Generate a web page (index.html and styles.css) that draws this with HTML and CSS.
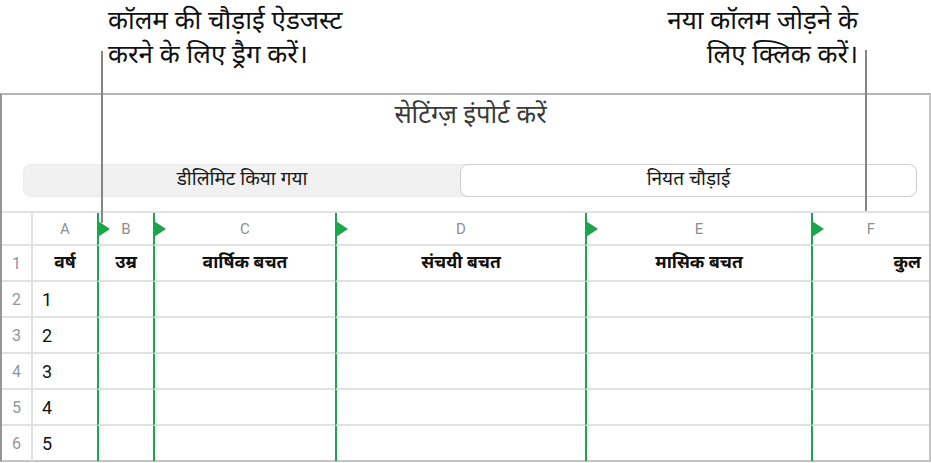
FILE: index.html
```html
<!DOCTYPE html>
<html lang="hi">
<head>
<meta charset="utf-8">
<title>सेटिंग्ज़ इंपोर्ट करें</title>
<link rel="stylesheet" href="styles.css">
</head>
<body>
<div class="page">
  <div class="callouts">
    <div class="callout callout-left">कॉलम की चौड़ाई ऐडजस्ट<br>करने के लिए ड्रैग करें।</div>
    <div class="callout callout-right">नया कॉलम जोड़ने के<br>लिए क्लिक करें।</div>
  </div>
  <div class="dialog">
    <div class="title">सेटिंग्ज़ इंपोर्ट करें</div>
    <div class="segmented">
      <div class="seg seg-left">डीलिमिट किया गया</div>
      <div class="seg seg-right">नियत चौड़ाई</div>
    </div>
    <div class="sheet">
      <div class="cell hdr num"></div>
      <div class="cell hdr">A</div>
      <div class="cell hdr g mark">B</div>
      <div class="cell hdr g mark">C</div>
      <div class="cell hdr g mark">D</div>
      <div class="cell hdr g mark">E</div>
      <div class="cell hdr g mark">F</div>

      <div class="cell rn num">1</div>
      <div class="cell lbl">वर्ष</div>
      <div class="cell lbl g">उम्र</div>
      <div class="cell lbl g">वार्षिक बचत</div>
      <div class="cell lbl g">संचयी बचत</div>
      <div class="cell lbl g">मासिक बचत</div>
      <div class="cell lbl g right">कुल</div>

      <div class="cell rn num">2</div>
      <div class="cell val">1</div>
      <div class="cell g"></div><div class="cell g"></div><div class="cell g"></div><div class="cell g"></div><div class="cell g"></div>

      <div class="cell rn num">3</div>
      <div class="cell val">2</div>
      <div class="cell g"></div><div class="cell g"></div><div class="cell g"></div><div class="cell g"></div><div class="cell g"></div>

      <div class="cell rn num">4</div>
      <div class="cell val">3</div>
      <div class="cell g"></div><div class="cell g"></div><div class="cell g"></div><div class="cell g"></div><div class="cell g"></div>

      <div class="cell rn num">5</div>
      <div class="cell val">4</div>
      <div class="cell g"></div><div class="cell g"></div><div class="cell g"></div><div class="cell g"></div><div class="cell g"></div>

      <div class="cell rn num last">6</div>
      <div class="cell val last">5</div>
      <div class="cell g last"></div><div class="cell g last"></div><div class="cell g last"></div><div class="cell g last"></div><div class="cell g last"></div>
    </div>
  </div>
  <div class="leader leader-left"></div>
  <div class="leader leader-right"></div>
</div>
</body>
</html>
```
FILE: styles.css
```css
html, body {
  margin: 0;
  padding: 0;
  background: #ffffff;
}
body {
  width: 931px;
  height: 463px;
  overflow: hidden;
  font-family: "Noto Sans Devanagari", "Noto Sans", "Roboto", sans-serif;
  color: #111;
}
.page {
  position: relative;
  width: 931px;
  height: 463px;
}
.callouts {
  height: 93px;
  box-sizing: border-box;
  display: flex;
  justify-content: space-between;
  align-items: flex-start;
  padding: 6px 73px 0 108px;
}
.callout {
  font-size: 26px;
  line-height: 34px;
  color: #111;
}
.callout-right {
  text-align: right;
}
.dialog {
  height: 369px;
  box-sizing: border-box;
  border-top: 2px solid #b5b5b5;
  border-left: 2px solid #959595;
  border-right: 2px solid #c4c4c4;
  border-bottom: 2px solid #c4c4c4;
  display: flex;
  flex-direction: column;
}
.dialog > * {
  flex-shrink: 0;
}
.title {
  text-align: center;
  font-size: 25.5px;
  line-height: 30px;
  height: 30px;
  color: #3a3a3a;
  padding-top: 7px;
  padding-left: 10px;
}
.segmented {
  margin: 32px 12px 0 21px;
  height: 33px;
  display: flex;
  background: #f1f1f1;
  border-radius: 8px;
  border: 1px solid #ececec;
  box-sizing: border-box;
}
.seg {
  display: flex;
  align-items: center;
  justify-content: center;
  font-size: 19px;
  color: #1a1a1a;
}
.seg-left {
  flex: 0 0 436px;
}
.seg-right {
  flex: 1;
  background: #ffffff;
  border: 1px solid #cfcfcf;
  border-radius: 8px;
  margin: -1px -1px -1px 0;
}
.sheet {
  margin-top: 14px;
  display: grid;
  grid-template-columns: 31px 64px 56px 182px 250px 226px 1fr;
  grid-template-rows: 33px 36px 36px 36px 36px 36px 35px;
  border-top: 2px solid #e2e2e2;
}
.cell {
  position: relative;
  box-sizing: border-box;
  border-bottom: 2px solid #e2e2e2;
  display: flex;
  align-items: center;
  justify-content: center;
}
.cell.last {
  border-bottom: none;
}
.num {
  border-right: 2px solid #e2e2e2;
}
.g {
  border-left: 2px solid #1aa64b;
}
.hdr {
  font-family: "Roboto", "Noto Sans", sans-serif;
  font-size: 15px;
  color: #8f8f8f;
}
.mark::before {
  content: "";
  position: absolute;
  left: -1px;
  top: 8px;
  width: 0;
  height: 0;
  border-top: 8px solid transparent;
  border-bottom: 8px solid transparent;
  border-left: 12px solid #1aa64b;
}
.rn {
  font-family: "Roboto", "Noto Sans", sans-serif;
  font-size: 16px;
  color: #959595;
}
.lbl {
  font-size: 17.5px;
  font-weight: 700;
  color: #111;
}
.lbl.right {
  justify-content: flex-end;
  padding-right: 8px;
}
.val {
  justify-content: flex-start;
  padding-left: 9px;
  font-family: "Roboto", "Noto Sans", sans-serif;
  font-size: 18px;
  color: #111;
}
.leader {
  position: absolute;
  width: 2px;
  background: #858585;
}
.leader-left {
  left: 101px;
  top: 51px;
  height: 172px;
}
.leader-right {
  left: 865px;
  top: 50px;
  height: 161px;
}
```
